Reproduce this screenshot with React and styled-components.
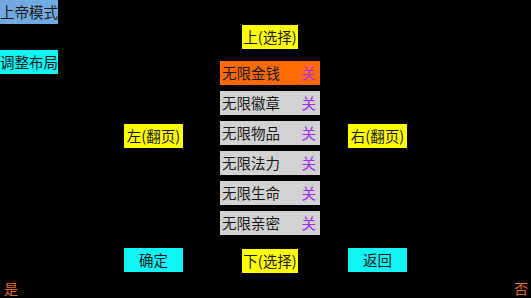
import React from "react";
import styled, { createGlobalStyle } from "styled-components";

const Global = createGlobalStyle`
  html, body { margin: 0; padding: 0; background: #000; }
  body { font-family: "Noto Sans CJK SC", "Noto Sans", sans-serif; }
`;

const Page = styled.div`
  width: 531px;
  height: 298px;
  background: #000;
  display: flex;
  flex-direction: column;
  overflow: hidden;
`;

const Main = styled.div`
  flex: 1;
  display: flex;
  flex-direction: row;
`;

const Column = styled.div`
  width: ${(p) => p.$w}px;
  display: flex;
  flex-direction: column;
  align-items: ${(p) => p.$align || "flex-start"};
  padding-top: ${(p) => p.$top || 0}px;
  box-sizing: border-box;
`;

const Btn = styled.div`
  height: 24px;
  box-sizing: border-box;
  padding: 0 ${(p) => (p.$pad ? 1 : 0)}px;
  background: ${(p) => p.$bg};
  color: #1a1a1a;
  font-size: 14.5px;
  line-height: 24px;
  text-align: center;
  white-space: nowrap;
  margin-top: ${(p) => p.$mt || 0}px;
`;

const Menu = styled.div`
  display: flex;
  flex-direction: column;
  gap: 6px;
  width: 100px;
  margin-top: 12px;
`;

const Row = styled.div`
  height: 24px;
  display: flex;
  align-items: center;
  justify-content: space-between;
  padding: 0 4px 0 2px;
  background: ${(p) => (p.$active ? "#ff6a00" : "#d2d2d2")};
  color: #1a1a1a;
  font-size: 14.5px;
  line-height: 24px;
`;

const Off = styled.span`
  color: ${(p) => (p.$active ? "#b030e0" : "#9a30f0")};
`;

const Footer = styled.div`
  height: 17px;
  display: flex;
  justify-content: space-between;
  padding: 0 3px 0 4px;
  color: #e06a25;
  font-size: 14px;
  line-height: 14px;
`;

const items = ["无限金钱", "无限徽章", "无限物品", "无限法力", "无限生命", "无限亲密"];

export default function App() {
  return (
    <Page>
      <Global />
      <Main>
        <Column $w={124}>
          <Btn $bg="#72a9e0">上帝模式</Btn>
          <Btn $bg="#10f4f4" $mt={26}>调整布局</Btn>
        </Column>
        <Column $w={59} $top={124} $align="stretch">
          <Btn $bg="#ffff00" $pad>左(翻页)</Btn>
          <Btn $bg="#10f4f4" $mt={100}>确定</Btn>
        </Column>
        <Column $w={37} />
        <Column $w={100} $top={25} $align="center">
          <Btn $bg="#ffff00" $pad>上(选择)</Btn>
          <Menu>
            {items.map((t, i) => (
              <Row key={t} $active={i === 0}>
                <span>{t}</span>
                <Off $active={i === 0}>关</Off>
              </Row>
            ))}
          </Menu>
          <Btn $bg="#ffff00" $mt={14} $pad>下(选择)</Btn>
        </Column>
        <Column $w={28} />
        <Column $w={59} $top={124} $align="stretch">
          <Btn $bg="#ffff00" $pad>右(翻页)</Btn>
          <Btn $bg="#10f4f4" $mt={100}>返回</Btn>
        </Column>
      </Main>
      <Footer>
        <span>是</span>
        <span>否</span>
      </Footer>
    </Page>
  );
}
